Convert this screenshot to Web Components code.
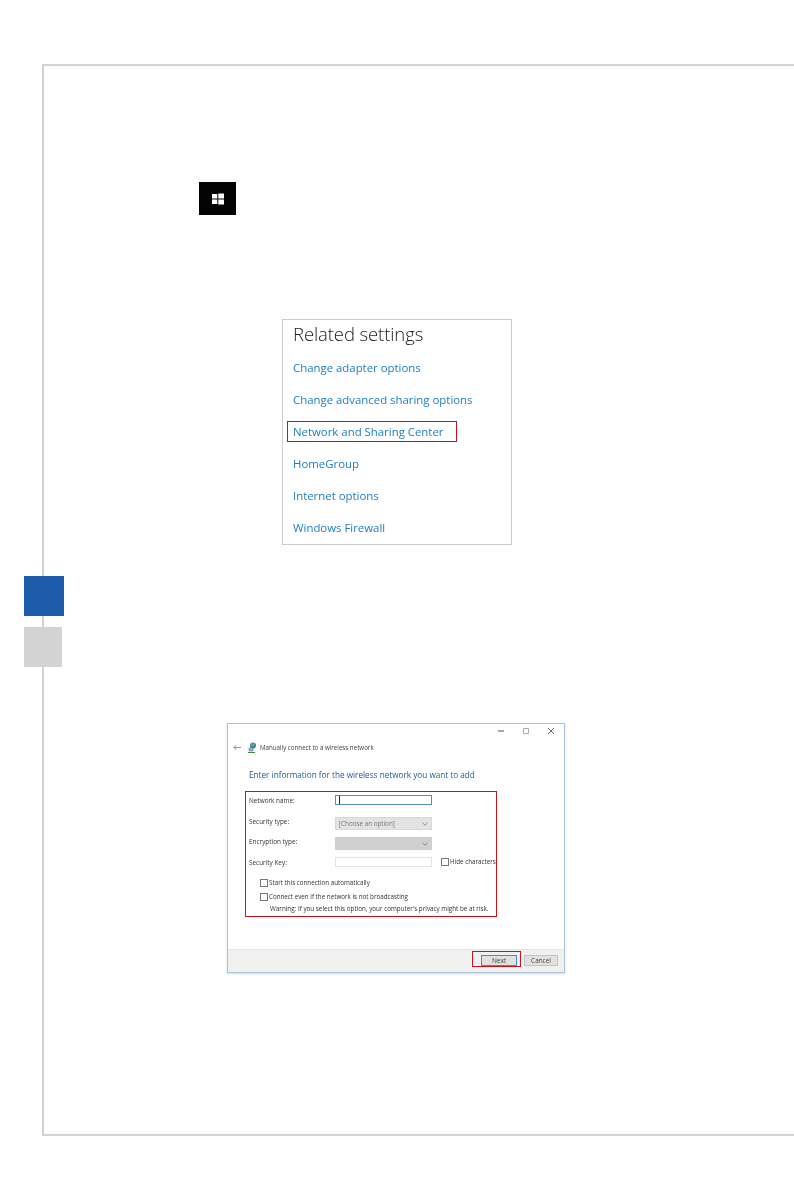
<!DOCTYPE html>
<html lang="en">
<head>
<meta charset="utf-8">
<title>Manual page</title>
<style>
  html, body { margin: 0; background: #fff; }
  body { font-family: "Open Sans", "Liberation Sans", sans-serif; }
</style>
</head>
<body>
<manual-page>
  <win-key></win-key>
  <related-settings heading="Related settings">
    <settings-link>Change adapter options</settings-link>
    <settings-link>Change advanced sharing options</settings-link>
    <settings-link marked>Network and Sharing Center</settings-link>
    <settings-link>HomeGroup</settings-link>
    <settings-link>Internet options</settings-link>
    <settings-link>Windows Firewall</settings-link>
  </related-settings>
  <wifi-dialog></wifi-dialog>
</manual-page>

<script>
class ManualPage extends HTMLElement {
    connectedCallback() {
        this.attachShadow({ mode: 'open' });
        this.shadowRoot.innerHTML = `
            <style>
                :host {
                    display: block;
                    box-sizing: border-box;
                    position: relative;
                    margin: 64px 0 0 42px;
                    width: 752px;
                    height: 1072px;
                    padding: 116px 0 0 155px;
                    border-top: 2px solid #d2d2d2;
                    border-left: 2px solid #d2d2d2;
                    border-bottom: 2px solid #d2d2d2;
                }
                .tab { position: absolute; left: -20px; }
                .blue { top: 510px; width: 40px; height: 40px; background: #1c5cab; }
                .gray { top: 561px; width: 38px; height: 40px; background: #d3d3d3; }
            </style>
            <div class="tab blue"></div>
            <div class="tab gray"></div>
            <slot></slot>
        `;
    }
}
customElements.define('manual-page', ManualPage);

class WinKey extends HTMLElement {
    connectedCallback() {
        this.attachShadow({ mode: 'open' });
        this.shadowRoot.innerHTML = `
            <style>
                :host {
                    display: flex;
                    align-items: center;
                    justify-content: center;
                    width: 37px;
                    height: 33px;
                    background: #020406;
                }
                svg { display: block; filter: blur(.25px); }
            </style>
            <svg width="12" height="12" viewBox="0 0 12 12" fill="#fff">
                <path d="M0 1h5.300v4.500H0zM6.300.5H12v5H6.300zM0 6.500h5.300V11H0zM6.300 6.500H12v5H6.300z"/>
            </svg>
        `;
    }
}
customElements.define('win-key', WinKey);

class RelatedSettings extends HTMLElement {
    connectedCallback() {
        this.attachShadow({ mode: 'open' });
        this.shadowRoot.innerHTML = `
            <style>
                :host {
                    display: block;
                    box-sizing: border-box;
                    width: 230px;
                    height: 226px;
                    margin: 104px 0 0 83px;
                    padding: 0 0 0 10px;
                    border: 1px solid #cdcdcd;
                }
                h2 {
                    margin: 0 0 3px;
                    height: 29px;
                    font: 300 18.5px/27px "Open Sans", sans-serif;
                    letter-spacing: -.1px;
                    color: #222;
                    filter: blur(.25px);
                }
                .links { display: flex; flex-direction: column; }
            </style>
            <h2>${this.getAttribute('heading')}</h2>
            <div class="links"><slot></slot></div>
        `;
    }
}
customElements.define('related-settings', RelatedSettings);

class SettingsLink extends HTMLElement {
    connectedCallback() {
        this.attachShadow({ mode: 'open' });
        this.shadowRoot.innerHTML = `
            <style>
                :host {
                    display: block;
                    position: relative;
                    height: 32px;
                    font: 400 11.4px/32px "Open Sans", sans-serif;
                    color: #1a7fc2;
                }
                span { display: block; filter: blur(.25px); }
                .mark {
                    position: absolute;
                    left: -6px;
                    top: 5px;
                    width: 170px;
                    height: 21px;
                    box-sizing: border-box;
                    border: 1px solid #c8141e;
                }
            </style>
            <span><slot></slot></span>
            ${this.hasAttribute('marked') ? '<div class="mark"></div>' : ''}
        `;
    }
}
customElements.define('settings-link', SettingsLink);

class FormRow extends HTMLElement {
    connectedCallback() {
        this.attachShadow({ mode: 'open' });
        this.shadowRoot.innerHTML = `
            <style>
                :host {
                    display: grid;
                    grid-template-columns: 86px 97px auto;
                    align-items: center;
                    font-size: 6.4px;
                    color: #333;
                }
            </style>
            <slot name="label"></slot>
            <slot name="field"></slot>
            <slot name="extra"></slot>
        `;
    }
}
customElements.define('form-row', FormRow);

class TinyCheck extends HTMLElement {
    connectedCallback() {
        this.attachShadow({ mode: 'open' });
        this.shadowRoot.innerHTML = `
            <style>
                :host {
                    display: flex;
                    align-items: center;
                    gap: 1px;
                    font-size: 6.25px;
                    line-height: 8px;
                    color: #333;
                    white-space: nowrap;
                }
                i {
                    display: block;
                    box-sizing: border-box;
                    flex: none;
                    width: 8px;
                    height: 8px;
                    border: 1px solid #777;
                    background: #fff;
                }
            </style>
            <i></i><slot></slot>
        `;
    }
}
customElements.define('tiny-check', TinyCheck);

class DialogField extends HTMLElement {
    connectedCallback() {
        this.attachShadow({ mode: 'open' });
        this.shadowRoot.innerHTML = `
            <style>
                :host {
                    display: flex;
                    align-items: center;
                    justify-content: space-between;
                    box-sizing: border-box;
                    height: 100%;
                    padding: 0 3px;
                    font-size: 6.3px;
                    color: #777;
                    border: 1px solid #e2e2e2;
                    background: #fff;
                }
                :host([kind="focus"]) { border-color: #4f94b8; }
                :host([kind="select"]) { background: #e3e3e3; border-color: #d8d8d8; }
                :host([kind="off"]) { background: #cfcfcf; border-color: #cfcfcf; }
                b { display: block; width: 1px; height: 8px; background: #222; }
                svg { display: block; }
            </style>
            ${this.getAttribute('kind') === 'focus' ? '<b></b>' : ''}
            <span><slot></slot></span>
            ${/select|off/.test(this.getAttribute('kind')) ? `
            <svg width="6" height="4" viewBox="0 0 6 4" fill="none" stroke="#777" stroke-width=".8"><path d="M.5.8 3 3.200 5.500.8"/></svg>` : ''}
        `;
    }
}
customElements.define('dialog-field', DialogField);

class WifiDialog extends HTMLElement {
    connectedCallback() {
        this.attachShadow({ mode: 'open' });
        this.shadowRoot.innerHTML = `
            <style>
                :host {
                    display: flex;
                    flex-direction: column;
                    box-sizing: border-box;
                    width: 338px;
                    height: 250px;
                    margin: 178px 0 0 28px;
                    border: 1px solid #a9c6de;
                    box-shadow: 0 1px 2px rgba(0,0,0,.16);
                    background: #fff;
                    font-family: "Open Sans", sans-serif;
                    filter: blur(.3px);
                }
                .controls {
                    display: flex;
                    justify-content: flex-end;
                    align-items: center;
                    gap: 19px;
                    height: 14px;
                    padding: 0 10px 0 0;
                }
                .controls svg { display: block; }
                .nav {
                    display: flex;
                    align-items: center;
                    height: 18px;
                    padding-left: 5px;
                    font-size: 6.2px;
                    color: #444;
                }
                .nav .back { margin-right: 7px; }
                .nav .net { margin-right: 3px; }
                h3 {
                    margin: 12px 0 0 21px;
                    height: 14px;
                    font: 400 8.2px/14px "Open Sans", sans-serif;
                    color: #1d5a96;
                }
                .form {
                    box-sizing: border-box;
                    width: 252px;
                    height: 126px;
                    margin: 9px 0 0 17px;
                    padding: 3px 0 0 3px;
                    border: 1px solid #c8141e;
                    display: flex;
                    flex-direction: column;
                }
                .up { position: relative; top: -2px; }
                .checks {
                    display: flex;
                    flex-direction: column;
                    gap: 6px;
                    margin: 12px 0 0 11px;
                }
                .warn {
                    margin: 3px 0 0 21px;
                    font-size: 6.3px;
                    line-height: 9px;
                    color: #333;
                    white-space: nowrap;
                }
                .spacer { flex: 1; }
                .foot {
                    display: flex;
                    justify-content: flex-end;
                    align-items: center;
                    gap: 7px;
                    box-sizing: border-box;
                    height: 23px;
                    padding: 0 6px 1px 0;
                    background: #f0f0f0;
                    border-top: 1px solid #e4e4e4;
                }
                button {
                    box-sizing: border-box;
                    width: 34px;
                    height: 11px;
                    padding: 0;
                    font: 400 6.4px/9px "Open Sans", sans-serif;
                    color: #444;
                    background: #e1e1e1;
                    border: 1px solid #c4c4c4;
                    border-radius: 0;
                }
                .next {
                    position: relative;
                    width: 36px;
                    border-color: #3f8fc4;
                    overflow: visible;
                }
                .next::after {
                    content: "";
                    position: absolute;
                    left: -10px;
                    top: -5px;
                    width: 49px;
                    height: 16px;
                    border: 1px solid #c8141e;
                    box-sizing: border-box;
                }
            </style>
            <div class="controls">
                <svg width="6" height="6" viewBox="0 0 6 6" stroke="#555" stroke-width="1"><path d="M0 3h6"/></svg>
                <svg width="6" height="6" viewBox="0 0 6 6" fill="none" stroke="#aaa" stroke-width="1"><path d="M.5.5h5v5h-5z"/></svg>
                <svg width="6" height="6" viewBox="0 0 6 6" stroke="#555" stroke-width=".9"><path d="m0 0 6 6M6 0 0 6"/></svg>
            </div>
            <div class="nav">
                <svg class="back" width="8" height="7" viewBox="0 0 8 7" fill="none" stroke="#777" stroke-width=".8"><path d="M8 3.500H1M3.500 1 1 3.500 3.500 6"/></svg>
                <svg class="net" width="9" height="11" viewBox="0 0 9 11">
                    <circle cx="5" cy="3.500" r="3" fill="#3f7fb8"/>
                    <path d="M3.500 1.500h3l-1 2.500h-2z" fill="#7ab648"/>
                    <path d="M1 6h4v3H1z" fill="#9fb7cc" stroke="#44607a" stroke-width=".5"/>
                    <path d="M0 10.500h7" stroke="#3d8b4a" stroke-width="1"/>
                </svg>
                <span>Manually connect to a wireless network</span>
            </div>
            <h3>Enter information for the wireless network you want to add</h3>
            <div class="form">
                <form-row style="height:10px;margin-bottom:12px">
                    <span slot="label">Network name:</span>
                    <dialog-field slot="field" kind="focus"></dialog-field>
                </form-row>
                <form-row style="height:13px;margin-bottom:7px">
                    <span slot="label" class="up">Security type:</span>
                    <dialog-field slot="field" kind="select">[Choose an option]</dialog-field>
                </form-row>
                <form-row style="height:13px;margin-bottom:7px">
                    <span slot="label" class="up">Encryption type:</span>
                    <dialog-field slot="field" kind="off"></dialog-field>
                </form-row>
                <form-row style="height:10px">
                    <span slot="label">Security Key:</span>
                    <dialog-field slot="field"></dialog-field>
                    <tiny-check slot="extra" style="margin-left:9px">Hide characters</tiny-check>
                </form-row>
                <div class="checks">
                    <tiny-check>Start this connection automatically</tiny-check>
                    <tiny-check>Connect even if the network is not broadcasting</tiny-check>
                </div>
                <div class="warn">Warning: If you select this option, your computer's privacy might be at risk.</div>
            </div>
            <div class="spacer"></div>
            <div class="foot">
                <button class="next">Next</button>
                <button>Cancel</button>
            </div>
        `;
    }
}
customElements.define('wifi-dialog', WifiDialog);
</script>
</body>
</html>
